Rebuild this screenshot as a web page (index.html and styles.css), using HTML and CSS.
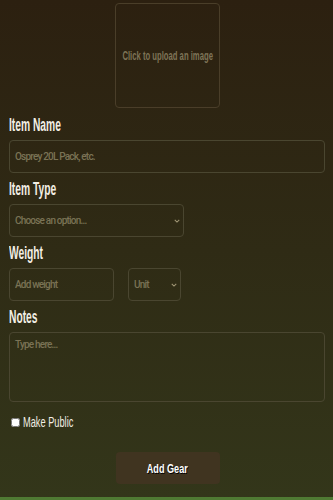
FILE: index.html
```html
<!DOCTYPE html>
<html lang="en">
<head>
    <meta charset="UTF-8">
    <meta name="viewport" content="width=device-width, initial-scale=1.0">
    <title>Add Gear</title>
    <link rel="stylesheet" href="styles.css">
</head>
<body>
    <form class="gear-form">
        <label class="upload-box">
            <span class="narrow upload-text">Click to upload an image</span>
        </label>

        <label class="field-label" for="itemName"><span class="narrow">Item Name</span></label>
        <input class="field" id="itemName" type="text" placeholder="Osprey 20L Pack, etc.">

        <label class="field-label" for="itemType"><span class="narrow">Item Type</span></label>
        <div class="select-wrap type-select">
            <select class="field" id="itemType">
                <option>Choose an option...</option>
            </select>
            <svg class="chevron" viewBox="0 0 8 5" width="6" height="4"><path d="M1 1l3 3 3-3" fill="none" stroke="currentColor" stroke-width="1.4"/></svg>
        </div>

        <label class="field-label" for="weight"><span class="narrow">Weight</span></label>
        <div class="weight-row">
            <input class="field weight-input" id="weight" type="text" placeholder="Add weight">
            <div class="select-wrap unit-select">
                <select class="field">
                    <option>Unit</option>
                </select>
                <svg class="chevron" viewBox="0 0 8 5" width="6" height="4"><path d="M1 1l3 3 3-3" fill="none" stroke="currentColor" stroke-width="1.4"/></svg>
            </div>
        </div>

        <label class="field-label" for="notes"><span class="narrow">Notes</span></label>
        <textarea class="field notes" id="notes" placeholder="Type here..."></textarea>

        <label class="check-row">
            <input type="checkbox" class="check">
            <span class="narrow">Make Public</span>
        </label>

        <button type="button" class="submit-btn"><span class="narrow">Add Gear</span></button>
    </form>
    <div class="bottom-bar"></div>
</body>
</html>
```

FILE: styles.css
```css
html, body {
    margin: 0;
    padding: 0;
    height: 100%;
}

body {
    font-family: "Liberation Sans", Arial, sans-serif;
    background: linear-gradient(to bottom, #2c2010 0%, #2f2b15 50%, #33361a 100%);
    color: #f2eee4;
    display: flex;
    flex-direction: column;
    min-height: 500px;
}

/* no condensed face installed, so squeeze the text instead */
.narrow {
    display: inline-block;
    white-space: nowrap;
    transform: scaleX(0.57);
    transform-origin: left center;
}

.gear-form {
    flex: 1;
    display: flex;
    flex-direction: column;
    padding: 3px 8px 0 9px;
}

.upload-box {
    align-self: center;
    width: 103px;
    height: 103px;
    border: 1px solid #4a3e29;
    border-radius: 4px;
    display: flex;
    align-items: center;
    justify-content: center;
    margin-left: 1px;
    cursor: pointer;
}

.upload-text {
    font-size: 12px;
    font-weight: bold;
    color: #7e7457;
    transform-origin: center;
    transform: scaleX(0.64);
}

.field-label {
    font-size: 18px;
    font-weight: bold;
    line-height: 20px;
    margin: 6px 0 5px;
    white-space: nowrap;
}

.upload-box + .field-label {
    margin-top: 7px;
}

.field {
    box-sizing: border-box;
    height: 33px;
    background: transparent;
    border: 1px solid #4a4630;
    border-radius: 4px;
    padding: 0 5px;
    font-family: Roboto, sans-serif;
    font-weight: 500;
    font-size: 10px;
    letter-spacing: -0.8px;
    color: #7a7355;
    outline: none;
}

.field::placeholder {
    color: #7a7355;
}

.select-wrap {
    position: relative;
    display: flex;
}

.select-wrap .field {
    width: 100%;
    appearance: none;
    -webkit-appearance: none;
}

.chevron {
    position: absolute;
    right: 4px;
    top: 15px;
    color: #a09675;
    pointer-events: none;
}

.type-select {
    width: 175px;
}

.weight-row {
    display: flex;
    gap: 14px;
}

.weight-input {
    width: 105px;
}

.unit-select {
    width: 53px;
}

.notes {
    height: 70px;
    padding: 6px 5px;
    resize: none;
}

.check-row {
    display: flex;
    align-items: center;
    gap: 3px;
    height: 16px;
    margin: 12px 0 0 2px;
    font-size: 14px;
}

.check {
    width: 9px;
    height: 9px;
    margin: 0;
    flex-shrink: 0;
}

.check-row .narrow {
    transform: scaleX(0.66);
}

.submit-btn {
    align-self: center;
    margin: 22px 0 0 1px;
    width: 104px;
    height: 32px;
    background: #403420;
    border: none;
    border-radius: 4px;
    color: #ffffff;
    font-family: inherit;
    font-size: 13px;
    font-weight: bold;
    text-shadow: 1px 1px 0 #000;
    padding: 0;
}

.submit-btn .narrow {
    transform-origin: center;
    transform: scaleX(0.7);
}

.bottom-bar {
    height: 3px;
    background: #4f7a33;
}
```
